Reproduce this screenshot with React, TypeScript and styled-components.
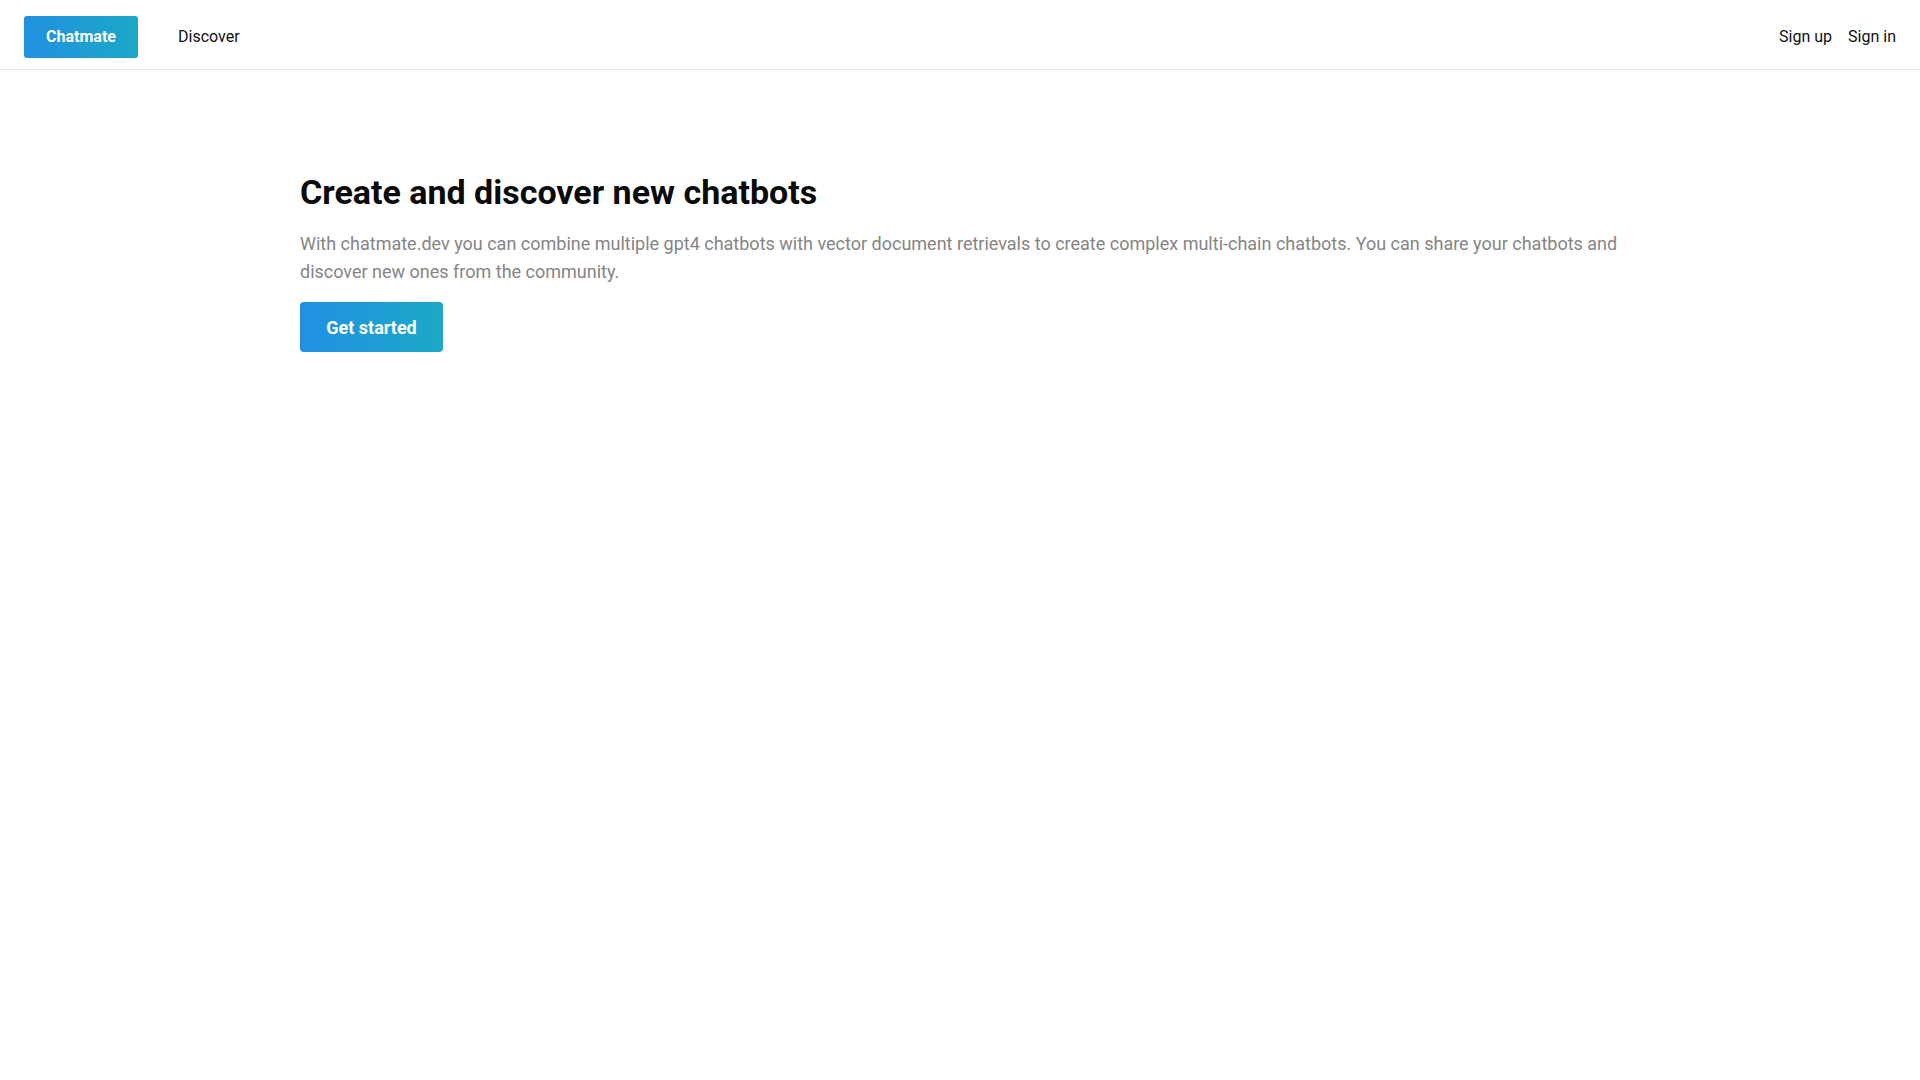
import styled, { createGlobalStyle } from 'styled-components'

const GlobalStyle = createGlobalStyle`
  * {
    box-sizing: border-box;
  }
  body {
    margin: 0;
    background: #ffffff;
    font-family: Roboto, 'Liberation Sans', Arial, sans-serif;
    color: #111111;
  }
`

const brandGradient = 'linear-gradient(to right, #2190e2, #1ba9c6)'

export default function App() {
  return (
    <>
      <GlobalStyle />
      <Navbar>
        <NavLeft>
          <Brand href="#">Chatmate</Brand>
          <NavLink href="#">Discover</NavLink>
        </NavLeft>
        <NavRight>
          <NavLink href="#">Sign up</NavLink>
          <NavLink href="#">Sign in</NavLink>
        </NavRight>
      </Navbar>

      <Hero>
        <Title>Create and discover new chatbots</Title>
        <Lead>
          With chatmate.dev you can combine multiple gpt4 chatbots with vector
          document retrievals to create complex multi-chain chatbots. You can
          share your chatbots and discover new ones from the community.
        </Lead>
        <CtaButton type="button">Get started</CtaButton>
      </Hero>
    </>
  )
}

const Navbar = styled.nav`
  height: 70px;
  display: flex;
  align-items: center;
  justify-content: space-between;
  padding: 4px 24px 0 24px;
  border-bottom: 1px solid #e6e6e6;
`

const NavLeft = styled.div`
  display: flex;
  align-items: center;
  gap: 40px;
`

const NavRight = styled.div`
  display: flex;
  align-items: center;
  gap: 16px;
`

const Brand = styled.a`
  display: inline-flex;
  align-items: center;
  justify-content: center;
  width: 114px;
  height: 42px;
  border-radius: 3px;
  background: ${brandGradient};
  color: #ffffff;
  font-size: 16px;
  font-weight: 700;
  text-decoration: none;
`

const NavLink = styled.a`
  color: #111111;
  font-size: 16px;
  text-decoration: none;
`

const Hero = styled.main`
  max-width: 1320px;
  margin: 0 auto;
  padding-top: 102px;
`

const Title = styled.h1`
  margin: 0;
  font-size: 34px;
  line-height: 40px;
  font-weight: 700;
  color: #0a0a0a;
`

const Lead = styled.p`
  margin: 18px 0 0;
  font-size: 18px;
  line-height: 28px;
  color: #858585;
`

const CtaButton = styled.button`
  margin-top: 16px;
  width: 143px;
  height: 50px;
  border: none;
  border-radius: 4px;
  background: ${brandGradient};
  color: #ffffff;
  font-family: inherit;
  font-size: 18px;
  font-weight: 700;
  cursor: pointer;
`
